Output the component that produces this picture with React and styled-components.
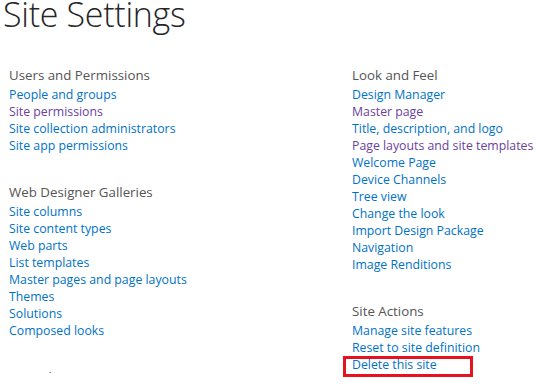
import React from "react";
import styled, { createGlobalStyle } from "styled-components";

const Global = createGlobalStyle`
  html, body { margin: 0; padding: 0; background: #ffffff; }
  body { font-family: "Open Sans", "Noto Sans", sans-serif; overflow: hidden; }
`;

const Page = styled.div`
  width: 540px;
  height: 388px;
  overflow: hidden;
  background: #fff;
`;

const Title = styled.h1`
  margin: -8px 0 0 3px;
  font-family: "Open Sans", "Noto Sans", sans-serif;
  font-weight: 300;
  font-size: 34px;
  line-height: 44px;
  color: #262626;
  letter-spacing: -0.3px;
`;

const Columns = styled.div`
  display: grid;
  grid-template-columns: 343px 1fr;
  padding-left: 9px;
  margin-top: 30px;
`;

const Column = styled.div`
  display: flex;
  flex-direction: column;
  ${(p) => p.$height && `height: ${p.$height}; overflow: hidden;`}
`;

const Section = styled.section`
  display: flex;
  flex-direction: column;
  margin-bottom: 30px;
`;

const Heading = styled.h2`
  margin: 0;
  font-weight: 400;
  font-size: 13.3px;
  line-height: 19px;
  color: #555;
  white-space: nowrap;
`;

const List = styled.ul`
  list-style: none;
  margin: 0;
  padding: 0;
`;

const Item = styled.li`
  line-height: 17px;
  height: 17px;
`;

const Link = styled.a`
  display: inline-block;
  font-size: 12.3px;
  line-height: 17px;
  color: ${(p) => (p.$visited ? "#6b3fa0" : "#0072c6")};
  text-decoration: none;
  white-space: nowrap;
  position: relative;
  ${(p) =>
    p.$highlight &&
    `
    &::after {
      content: "";
      position: absolute;
      left: -9px;
      right: -36px;
      top: 0;
      bottom: -4px;
      border: 3px solid #e8111f;
    }
  `}
`;

const sections = {
  left: [
    {
      title: "Users and Permissions",
      links: [
        ["People and groups"],
        ["Site permissions", true],
        ["Site collection administrators"],
        ["Site app permissions"],
      ],
    },
    {
      title: "Web Designer Galleries",
      links: [
        ["Site columns"],
        ["Site content types"],
        ["Web parts"],
        ["List templates"],
        ["Master pages and page layouts"],
        ["Themes"],
        ["Solutions"],
        ["Composed looks"],
      ],
    },
    { title: "Site Administration", links: [] },
  ],
  right: [
    {
      title: "Look and Feel",
      links: [
        ["Design Manager"],
        ["Master page", true],
        ["Title, description, and logo"],
        ["Page layouts and site templates", true],
        ["Welcome Page"],
        ["Device Channels"],
        ["Tree view"],
        ["Change the look"],
        ["Import Design Package"],
        ["Navigation"],
        ["Image Renditions"],
      ],
    },
    {
      title: "Site Actions",
      links: [
        ["Manage site features"],
        ["Reset to site definition"],
        ["Delete this site", false, true],
      ],
    },
  ],
};

function renderColumn(list) {
  return list.map((s) => (
    <Section key={s.title}>
      <Heading>{s.title}</Heading>
      <List>
        {s.links.map(([label, visited, highlight]) => (
          <Item key={label}>
            <Link href="#" $visited={visited} $highlight={highlight}>
              {label}
            </Link>
          </Item>
        ))}
      </List>
    </Section>
  ));
}

export default function App() {
  return (
    <Page>
      <Global />
      <Title>Site Settings</Title>
      <Columns>
        <Column $height="307px">{renderColumn(sections.left)}</Column>
        <Column>{renderColumn(sections.right)}</Column>
      </Columns>
    </Page>
  );
}
